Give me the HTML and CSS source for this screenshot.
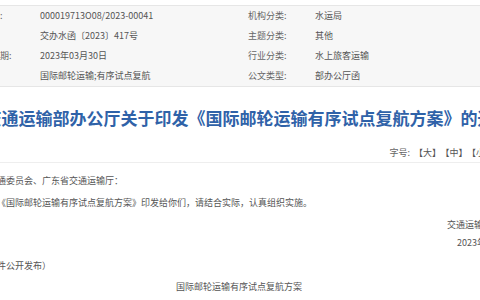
FILE: index.html
```html
<!DOCTYPE html>
<html lang="zh-CN">
<head>
<meta charset="utf-8">
<title>交通运输部办公厅关于印发《国际邮轮运输有序试点复航方案》的通知</title>
<link rel="stylesheet" href="styles.css">
</head>
<body>
<div class="page">
  <div class="meta">
    <div class="label">索引号:</div><div class="value">000019713O08/2023-00041</div>
    <div class="label">机构分类:</div><div class="value">水运局</div>
    <div class="label">文号:</div><div class="value">交办水函〔2023〕417号</div>
    <div class="label">主题分类:</div><div class="value">其他</div>
    <div class="label">成文日期:</div><div class="value">2023年03月30日</div>
    <div class="label">行业分类:</div><div class="value">水上旅客运输</div>
    <div class="label">主题词</div><div class="value">国际邮轮运输;有序试点复航</div>
    <div class="label">公文类型:</div><div class="value">部办公厅函</div>
  </div>

  <h1 class="title">交通运输部办公厅关于印发《国际邮轮运输有序试点复航方案》的通知</h1>

  <div class="fontsize">
    <span class="fs-label">字号:</span><span class="fs-item">【大】</span><span class="fs-item">【中】</span><span class="fs-item">【小】</span>
  </div>

  <div class="content">
    <p class="line">上海市交通委员会、广东省交通运输厅：</p>
    <p class="line indent">现将《国际邮轮运输有序试点复航方案》印发给你们，请结合实际，认真组织实施。</p>
    <p class="line right">交通运输部办公厅</p>
    <p class="line right date">2023年3月30日</p>
    <p class="line indent note">（此件公开发布）</p>
    <p class="line center attach">国际邮轮运输有序试点复航方案</p>
  </div>
</div>
</body>
</html>
```

FILE: styles.css
```css
html, body {
  margin: 0;
  padding: 0;
  background: #ffffff;
  overflow: hidden;
}

body {
  width: 480px;
  height: 300px;
  font-family: "Noto Sans CJK SC", "Microsoft YaHei", sans-serif;
  color: #555555;
}

.page {
  width: 574px;
  margin-left: -39px;
  padding-top: 5px;
}

.meta {
  display: grid;
  grid-template-columns: 67px 208px 67px 208px;
  grid-auto-rows: 20px;
  align-items: center;
  padding: 0 12px;
  background: #f7f7f7;
  border-top: 1px solid #e6e6e6;
  border-bottom: 1px solid #e6e6e6;
  font-size: 9px;
  line-height: 20px;
}

.label {
  color: #666666;
  white-space: nowrap;
}

.value {
  color: #555555;
  white-space: nowrap;
}

.title {
  margin: 19px 0 0;
  font-size: 17px;
  line-height: 24px;
  font-weight: bold;
  color: #2f62a8;
  text-align: center;
  white-space: nowrap;
}

.fontsize {
  margin-top: 14px;
  height: 18px;
  line-height: 18px;
  font-size: 9px;
  color: #666666;
  text-align: right;
  padding-right: 41px;
  border-bottom: 1px solid #eeeeee;
  white-space: nowrap;
}

.fs-item {
  margin-left: 4px;
  color: #555555;
}

.content {
  padding: 7px 16px 0 0;
  font-size: 9px;
  color: #555555;
}

.line {
  margin: 0;
  line-height: 22px;
  white-space: nowrap;
}

.indent {
  text-indent: 18px;
}

.right {
  text-align: right;
}

.date {
  line-height: 18px;
  margin-top: -2px;
}

.note {
  margin-top: 3px;
}

.center {
  text-align: center;
}

.attach {
  line-height: 20px;
  padding-right: 2px;
}
```
